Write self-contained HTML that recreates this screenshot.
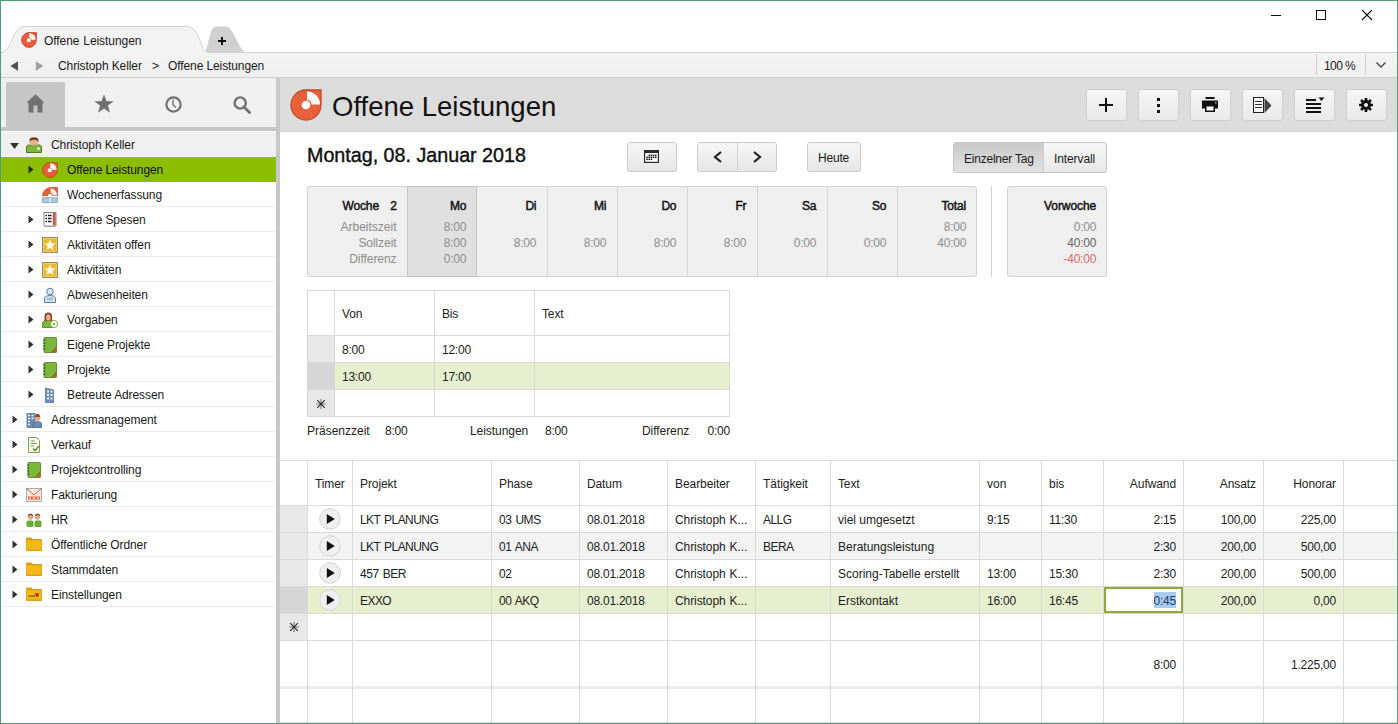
<!DOCTYPE html>
<html><head><meta charset="utf-8"><style>
html,body{margin:0;padding:0;}
body{width:1398px;height:724px;position:relative;overflow:hidden;background:#fff;font-family:"Liberation Sans", sans-serif;}
div{position:absolute;box-sizing:border-box;}
.t{white-space:nowrap;line-height:1;}
</style></head><body>
<div style="left:1px;top:53px;width:1396px;height:25px;background:linear-gradient(#f3f3f3,#efefef)"></div><div style="left:1px;top:77px;width:1396px;height:1px;background:#d0d0d0"></div><svg style="position:absolute;left:0px;top:0px" width="260" height="54" viewBox="0 0 260 54"><path d="M203 52.5 C209 52.5 208 27 216 26.5 L226 26.5 C234 27 239 52.5 247 52.5 Z" fill="#d0d0d0"/><path d="M1 52.5 C12 52.5 11 26.5 25 26.5 L187 26.5 C201 26.5 199 52.5 209 52.5 L209 54 L1 54 Z" fill="#f3f3f3"/><path d="M1 52.5 C12 52.5 11 26.5 25 26.5 L187 26.5 C201 26.5 199 52.5 209 52.5" fill="none" stroke="#d2d2d2" stroke-width="1"/></svg><div style="left:208px;top:52px;width:1189px;height:1px;background:#d2d2d2"></div><svg style="position:absolute;left:218px;top:37px" width="8" height="8" viewBox="0 0 8 8"><path d="M4 0 V8 M0 4 H8" stroke="#111" stroke-width="2"/></svg><svg style="position:absolute;left:21px;top:32px" width="16" height="16" viewBox="0 0 32 32"><path d="M16 1.2 A14.8 14.8 0 1 0 30.8 16 V1.2 Z" fill="#e8603a" stroke="#b8442a" stroke-width="1.6"/><path d="M16.6 15.4 V2.6 A12.8 12.8 0 0 1 29.4 15.4 Z" fill="#fff"/><circle cx="15.6" cy="16.4" r="5" fill="#e8603a"/><circle cx="15.6" cy="16.4" r="4" fill="#fff"/></svg><div class="t" style="left:44px;top:34.84px;font-size:12px;color:#1a1a1a;font-weight:normal;;letter-spacing:-0.07px;word-spacing:0.67px">Offene Leistungen</div><div style="left:1271px;top:15px;width:10px;height:1px;background:#111"></div><div style="left:1316px;top:10px;width:10px;height:10px;border:1px solid #111"></div><svg style="position:absolute;left:1361px;top:9px" width="12" height="12" viewBox="0 0 12 12"><path d="M1 1 L11 11 M11 1 L1 11" stroke="#111" stroke-width="1.1"/></svg><svg style="position:absolute;left:10px;top:61px" width="9" height="10" viewBox="0 0 9 10"><path d="M8 0.3 L0.3 5 L8 9.7 Z" fill="#505050"/></svg><svg style="position:absolute;left:35px;top:61px" width="9" height="10" viewBox="0 0 9 10"><path d="M0.8 0.3 L8.5 5 L0.8 9.7 Z" fill="#a0a0a0"/></svg><div class="t" style="left:58px;top:59.84px;font-size:12px;color:#1a1a1a;font-weight:normal;letter-spacing:-0.1px">Christoph Keller</div><div class="t" style="left:152px;top:59.84px;font-size:12px;color:#1a1a1a;font-weight:normal;">&gt;</div><div class="t" style="left:168px;top:59.84px;font-size:12px;color:#1a1a1a;font-weight:normal;letter-spacing:-0.1px">Offene Leistungen</div><div style="left:1316px;top:54px;width:1px;height:21px;background:#d0d0d0"></div><div style="left:1365px;top:54px;width:1px;height:21px;background:#d0d0d0"></div><div class="t" style="left:1324px;top:59.84px;font-size:12px;color:#1a1a1a;font-weight:normal;letter-spacing:-0.6px">100 %</div><svg style="position:absolute;left:1376px;top:62px" width="10" height="6" viewBox="0 0 10 6"><path d="M0.5 0.5 L5 5 L9.5 0.5" stroke="#444" stroke-width="1.4" fill="none"/></svg><div style="left:1px;top:78px;width:275px;height:49px;background:#f0f0f0"></div><div style="left:6px;top:82px;width:59px;height:46px;background:#c6c6c6;border-radius:2px 2px 0 0"></div><div style="left:1px;top:127px;width:275px;height:4px;background:#c6c6c6"></div><svg style="position:absolute;left:27px;top:94px" width="18" height="19" viewBox="0 0 18 19"><path d="M0.8 9 L8.5 1.8 L16.2 9" stroke="#707070" stroke-width="2.2" fill="none"/><path d="M1.5 9.2 L8.5 3.2 L15.5 9.2 V18.5 H10.5 V11.5 H6.5 V18.5 H1.5 Z" fill="#707070"/></svg><svg style="position:absolute;left:94px;top:94px" width="20" height="20" viewBox="0 0 20 20"><path d="M10 0.3 L12.5 7.2 L19.8 7.2 L13.9 11.6 L16.1 18.8 L10 14.5 L3.9 18.8 L6.1 11.6 L0.2 7.2 L7.5 7.2 Z" fill="#707070"/></svg><svg style="position:absolute;left:165px;top:96px" width="17" height="17" viewBox="0 0 17 17"><circle cx="8.5" cy="8.5" r="7.1" stroke="#707070" stroke-width="2.2" fill="none"/><path d="M8 3.5 V8.8 L11 11.5" stroke="#707070" stroke-width="1.4" fill="none"/></svg><svg style="position:absolute;left:233px;top:96px" width="18" height="18" viewBox="0 0 18 18"><circle cx="7.2" cy="7" r="5.6" stroke="#707070" stroke-width="2.4" fill="none"/><path d="M11 11 L16.5 16.5" stroke="#707070" stroke-width="2.8" stroke-linecap="round"/></svg><div style="left:276px;top:78px;width:4px;height:646px;background:#c8c8c8"></div><div style="left:1px;top:132px;width:275px;height:25px;background:#f0f0f0"></div><svg style="position:absolute;left:10px;top:143px" width="9" height="6" viewBox="0 0 9 6"><path d="M0 0 L9 0 L4.5 6 Z" fill="#333"/></svg><svg style="position:absolute;left:26px;top:137px" width="16" height="16" viewBox="0 0 16 16"><path d="M0.5 15.5 V10 C0.5 8.8 1.5 8 3 8 H13 C14.5 8 15.5 8.8 15.5 10 V15.5 Z" fill="#7ab83a" stroke="#4d7a25" stroke-width="1"/><rect x="4" y="1" width="8" height="7.5" rx="2" fill="#e6b08e"/><path d="M3.6 5.5 V3 C3.6 1.2 5 0.3 8 0.3 C11 0.3 12.4 1.2 12.4 3 V5.5 C11.8 3.5 10.5 2.8 8 2.8 C5.5 2.8 4.2 3.5 3.6 5.5 Z" fill="#7a3a1a"/><rect x="11" y="10.5" width="3" height="2.2" fill="#e8f8c0"/></svg><div class="t" style="left:51px;top:138.84px;font-size:12px;color:#1a1a1a;font-weight:normal;letter-spacing:-0.1px">Christoph Keller</div><div style="left:1px;top:157px;width:275px;height:25px;background:#8cbe00"></div><svg style="position:absolute;left:28px;top:165px" width="6" height="9" viewBox="0 0 6 9"><path d="M0.5 0.5 L5.5 4.5 L0.5 8.5 Z" fill="#1e3214"/></svg><svg style="position:absolute;left:42px;top:162px" width="16" height="16" viewBox="0 0 32 32"><path d="M16 1.2 A14.8 14.8 0 1 0 30.8 16 V1.2 Z" fill="#e8603a" stroke="#b8442a" stroke-width="1.6"/><path d="M16.6 15.4 V2.6 A12.8 12.8 0 0 1 29.4 15.4 Z" fill="#fff"/><circle cx="15.6" cy="16.4" r="5" fill="#e8603a"/><circle cx="15.6" cy="16.4" r="4" fill="#fff"/></svg><div class="t" style="left:67px;top:163.84px;font-size:12px;color:#111;font-weight:normal;letter-spacing:-0.1px">Offene Leistungen</div><div style="left:1px;top:206px;width:275px;height:1px;background:#ebebeb"></div><svg style="position:absolute;left:42px;top:187px" width="16" height="16" viewBox="0 0 16 16"><path d="M0.5 9 A8.5 8.5 0 0 1 9 0.5 H15.5 V9 Z" fill="#e8603a" stroke="#c24a26" stroke-width="0.7"/><path d="M8.7 8.3 V1.6 A6.7 6.7 0 0 1 15 8.3 Z" fill="#fff"/><circle cx="8" cy="8.6" r="2.9" fill="#e8603a"/><circle cx="8" cy="8.6" r="1.9" fill="#fff"/><rect x="0.3" y="9" width="15.4" height="1.8" fill="#fff"/><rect x="0.5" y="10.8" width="15" height="4.7" fill="#b0c8dc" stroke="#7e9cb8" stroke-width="0.8"/><rect x="7.6" y="11" width="0.9" height="4.5" fill="#fff"/></svg><div class="t" style="left:67px;top:188.84px;font-size:12px;color:#1a1a1a;font-weight:normal;letter-spacing:-0.1px">Wochenerfassung</div><div style="left:1px;top:231px;width:275px;height:1px;background:#ebebeb"></div><svg style="position:absolute;left:28px;top:215px" width="6" height="9" viewBox="0 0 6 9"><path d="M0.5 0.5 L5.5 4.5 L0.5 8.5 Z" fill="#333"/></svg><svg style="position:absolute;left:42px;top:212px" width="16" height="16" viewBox="0 0 16 16"><path d="M2 0.5 H14 V13.5 L13 14.8 L12 13.5 L11 14.8 L10 13.5 L9 14.8 L8 13.5 L7 14.8 L6 13.5 L5 14.8 L4 13.5 L3 14.8 L2 13.5 Z" fill="#fff" stroke="#666" stroke-width="0.8"/><rect x="10.8" y="0.8" width="2.8" height="12.6" fill="#d05a3a"/><path d="M3.5 3.5 H5 M6 3.5 H9.5 M3.5 6.5 H5 M6 6.5 H9.5 M3.5 9.5 H5 M6 9.5 H9.5" stroke="#222" stroke-width="1.3"/></svg><div class="t" style="left:67px;top:213.84px;font-size:12px;color:#1a1a1a;font-weight:normal;letter-spacing:-0.1px">Offene Spesen</div><div style="left:1px;top:256px;width:275px;height:1px;background:#ebebeb"></div><svg style="position:absolute;left:28px;top:240px" width="6" height="9" viewBox="0 0 6 9"><path d="M0.5 0.5 L5.5 4.5 L0.5 8.5 Z" fill="#333"/></svg><svg style="position:absolute;left:42px;top:237px" width="16" height="16" viewBox="0 0 16 16"><rect x="0.5" y="0.5" width="15" height="15" fill="#e8b830" stroke="#9a8a6a" stroke-width="1"/><rect x="1.5" y="1.5" width="13" height="13" fill="none" stroke="#f4d070" stroke-width="0.8"/><path d="M8 2.3 L9.7 6.1 L13.8 6.4 L10.7 9.1 L11.6 13.2 L8 11 L4.4 13.2 L5.3 9.1 L2.2 6.4 L6.3 6.1 Z" fill="#fffbe8" stroke="#f0c850" stroke-width="0.5"/></svg><div class="t" style="left:67px;top:238.84px;font-size:12px;color:#1a1a1a;font-weight:normal;letter-spacing:-0.1px">Aktivitäten offen</div><div style="left:1px;top:281px;width:275px;height:1px;background:#ebebeb"></div><svg style="position:absolute;left:28px;top:265px" width="6" height="9" viewBox="0 0 6 9"><path d="M0.5 0.5 L5.5 4.5 L0.5 8.5 Z" fill="#333"/></svg><svg style="position:absolute;left:42px;top:262px" width="16" height="16" viewBox="0 0 16 16"><rect x="0.5" y="0.5" width="15" height="15" fill="#e8b830" stroke="#9a8a6a" stroke-width="1"/><rect x="1.5" y="1.5" width="13" height="13" fill="none" stroke="#f4d070" stroke-width="0.8"/><path d="M8 2.3 L9.7 6.1 L13.8 6.4 L10.7 9.1 L11.6 13.2 L8 11 L4.4 13.2 L5.3 9.1 L2.2 6.4 L6.3 6.1 Z" fill="#fffbe8" stroke="#f0c850" stroke-width="0.5"/></svg><div class="t" style="left:67px;top:263.84px;font-size:12px;color:#1a1a1a;font-weight:normal;letter-spacing:-0.1px">Aktivitäten</div><div style="left:1px;top:306px;width:275px;height:1px;background:#ebebeb"></div><svg style="position:absolute;left:28px;top:290px" width="6" height="9" viewBox="0 0 6 9"><path d="M0.5 0.5 L5.5 4.5 L0.5 8.5 Z" fill="#333"/></svg><svg style="position:absolute;left:42px;top:287px" width="16" height="16" viewBox="0 0 16 16"><circle cx="8" cy="4.5" r="3.3" fill="#d8e6f2" stroke="#5a7fa8" stroke-width="1"/><path d="M2.5 15.5 V12 C2.5 9.5 4.5 8.5 8 8.5 C11.5 8.5 13.5 9.5 13.5 12 V15.5 Z" fill="#d8e6f2" stroke="#5a7fa8" stroke-width="1"/><rect x="5" y="10.5" width="6" height="3" fill="#a8c4dc"/></svg><div class="t" style="left:67px;top:288.84px;font-size:12px;color:#1a1a1a;font-weight:normal;letter-spacing:-0.1px">Abwesenheiten</div><div style="left:1px;top:331px;width:275px;height:1px;background:#ebebeb"></div><svg style="position:absolute;left:28px;top:315px" width="6" height="9" viewBox="0 0 6 9"><path d="M0.5 0.5 L5.5 4.5 L0.5 8.5 Z" fill="#333"/></svg><svg style="position:absolute;left:42px;top:312px" width="16" height="16" viewBox="0 0 16 16"><path d="M0.5 15.5 V11.5 C0.5 9.5 2 8.5 4.5 8.5 H9 C11 8.5 12 9.5 12 11.5 V15.5 Z" fill="#7ab83a" stroke="#4d7a25" stroke-width="0.8"/><path d="M2.5 9 V4 C2.5 1.5 4 0.5 6.3 0.5 C8.6 0.5 10.1 1.5 10.1 4 V9 Z" fill="#8a4a28"/><rect x="4.2" y="2.5" width="4.2" height="6" rx="1.5" fill="#e6b08e"/><g transform="translate(12 12)"><circle r="3.6" fill="#fff" stroke="#7ab83a" stroke-width="1"/><circle r="1.2" fill="#7ab83a"/></g></svg><div class="t" style="left:67px;top:313.84px;font-size:12px;color:#1a1a1a;font-weight:normal;letter-spacing:-0.1px">Vorgaben</div><div style="left:1px;top:356px;width:275px;height:1px;background:#ebebeb"></div><svg style="position:absolute;left:28px;top:340px" width="6" height="9" viewBox="0 0 6 9"><path d="M0.5 0.5 L5.5 4.5 L0.5 8.5 Z" fill="#333"/></svg><svg style="position:absolute;left:42px;top:337px" width="16" height="16" viewBox="0 0 16 16"><rect x="2" y="0.5" width="12.5" height="15" rx="0.8" fill="#7ab83a" stroke="#4a7a2a" stroke-width="0.8"/><path d="M1 3 H3.5 M1 6 H3.5 M1 9 H3.5 M1 12 H3.5" stroke="#3a5a20" stroke-width="1"/><path d="M9.5 15.5 L14.5 9.5 V15.5 Z" fill="#c8602a"/><path d="M9.5 15.5 L14.5 9.5" stroke="#4a6a2a" stroke-width="0.8"/></svg><div class="t" style="left:67px;top:338.84px;font-size:12px;color:#1a1a1a;font-weight:normal;letter-spacing:-0.1px">Eigene Projekte</div><div style="left:1px;top:381px;width:275px;height:1px;background:#ebebeb"></div><svg style="position:absolute;left:28px;top:365px" width="6" height="9" viewBox="0 0 6 9"><path d="M0.5 0.5 L5.5 4.5 L0.5 8.5 Z" fill="#333"/></svg><svg style="position:absolute;left:42px;top:362px" width="16" height="16" viewBox="0 0 16 16"><rect x="2" y="0.5" width="12.5" height="15" rx="0.8" fill="#7ab83a" stroke="#4a7a2a" stroke-width="0.8"/><path d="M1 3 H3.5 M1 6 H3.5 M1 9 H3.5 M1 12 H3.5" stroke="#3a5a20" stroke-width="1"/><path d="M9.5 15.5 L14.5 9.5 V15.5 Z" fill="#c8602a"/><path d="M9.5 15.5 L14.5 9.5" stroke="#4a6a2a" stroke-width="0.8"/></svg><div class="t" style="left:67px;top:363.84px;font-size:12px;color:#1a1a1a;font-weight:normal;letter-spacing:-0.1px">Projekte</div><div style="left:1px;top:406px;width:275px;height:1px;background:#ebebeb"></div><svg style="position:absolute;left:28px;top:390px" width="6" height="9" viewBox="0 0 6 9"><path d="M0.5 0.5 L5.5 4.5 L0.5 8.5 Z" fill="#333"/></svg><svg style="position:absolute;left:42px;top:387px" width="16" height="16" viewBox="0 0 16 16"><path d="M3 0.5 L12 2.5 V16 H3 Z" fill="#6a8cb0"/><path d="M5 4.5 H7 M8.5 4.5 H10.5 M5 8 H7 M8.5 8 H10.5 M5 11.5 H7 M8.5 11.5 H10.5" stroke="#f0f4f8" stroke-width="2"/></svg><div class="t" style="left:67px;top:388.84px;font-size:12px;color:#1a1a1a;font-weight:normal;letter-spacing:-0.1px">Betreute Adressen</div><div style="left:1px;top:431px;width:275px;height:1px;background:#ebebeb"></div><svg style="position:absolute;left:12px;top:415px" width="6" height="9" viewBox="0 0 6 9"><path d="M0.5 0.5 L5.5 4.5 L0.5 8.5 Z" fill="#333"/></svg><svg style="position:absolute;left:26px;top:412px" width="16" height="16" viewBox="0 0 16 16"><rect x="0.5" y="1" width="9" height="15" fill="#6a8cb0"/><path d="M2 3.5 H4 M5.5 3.5 H7.5 M2 6.5 H4 M5.5 6.5 H7.5 M2 9.5 H4 M2 12.5 H4" stroke="#e8f0f8" stroke-width="1.4"/><circle cx="11.5" cy="6" r="2.8" fill="#e0a888"/><path d="M9 5 C9 2.5 10 2 11.5 2 C13 2 14 2.5 14 5 Z" fill="#8a4a2a"/><path d="M7 16 V12.5 C7 10.5 9 9.5 11.5 9.5 C14 9.5 16 10.5 16 12.5 V16 Z" fill="#6a8cb0" stroke="#3a608a" stroke-width="0.6"/></svg><div class="t" style="left:51px;top:413.84px;font-size:12px;color:#1a1a1a;font-weight:normal;letter-spacing:-0.1px">Adressmanagement</div><div style="left:1px;top:456px;width:275px;height:1px;background:#ebebeb"></div><svg style="position:absolute;left:12px;top:440px" width="6" height="9" viewBox="0 0 6 9"><path d="M0.5 0.5 L5.5 4.5 L0.5 8.5 Z" fill="#333"/></svg><svg style="position:absolute;left:26px;top:437px" width="16" height="16" viewBox="0 0 16 16"><path d="M2.5 0.5 H10.5 L13.5 3.5 V15.5 H2.5 Z" fill="#fff" stroke="#7aa040" stroke-width="1"/><path d="M4.5 4 H9 M4.5 6.5 H11 M4.5 9 H8" stroke="#7aa040" stroke-width="1"/><path d="M7 11.5 L9 13.5 L13 9" stroke="#5a9a2a" stroke-width="1.6" fill="none"/></svg><div class="t" style="left:51px;top:438.84px;font-size:12px;color:#1a1a1a;font-weight:normal;letter-spacing:-0.1px">Verkauf</div><div style="left:1px;top:481px;width:275px;height:1px;background:#ebebeb"></div><svg style="position:absolute;left:12px;top:465px" width="6" height="9" viewBox="0 0 6 9"><path d="M0.5 0.5 L5.5 4.5 L0.5 8.5 Z" fill="#333"/></svg><svg style="position:absolute;left:26px;top:462px" width="16" height="16" viewBox="0 0 16 16"><rect x="2" y="0.5" width="12.5" height="15" rx="0.8" fill="#7ab83a" stroke="#4a7a2a" stroke-width="0.8"/><path d="M1 3 H3.5 M1 6 H3.5 M1 9 H3.5 M1 12 H3.5" stroke="#3a5a20" stroke-width="1"/><path d="M9.5 15.5 L14.5 9.5 V15.5 Z" fill="#c8602a"/><path d="M9.5 15.5 L14.5 9.5" stroke="#4a6a2a" stroke-width="0.8"/></svg><div class="t" style="left:51px;top:463.84px;font-size:12px;color:#1a1a1a;font-weight:normal;letter-spacing:-0.1px">Projektcontrolling</div><div style="left:1px;top:506px;width:275px;height:1px;background:#ebebeb"></div><svg style="position:absolute;left:12px;top:490px" width="6" height="9" viewBox="0 0 6 9"><path d="M0.5 0.5 L5.5 4.5 L0.5 8.5 Z" fill="#333"/></svg><svg style="position:absolute;left:26px;top:487px" width="16" height="16" viewBox="0 0 16 16"><rect x="0.5" y="1.5" width="15" height="13" fill="#f4e8e0" stroke="#999" stroke-width="0.8"/><path d="M0.5 1.5 L8 8 L15.5 1.5" stroke="#d9603a" stroke-width="1" fill="none"/><rect x="2" y="9.5" width="12" height="3" fill="#e06040"/><path d="M3 11 H5 M6.5 11 H9.5 M11 11 H13" stroke="#fff" stroke-width="1"/></svg><div class="t" style="left:51px;top:488.84px;font-size:12px;color:#1a1a1a;font-weight:normal;letter-spacing:-0.1px">Fakturierung</div><div style="left:1px;top:531px;width:275px;height:1px;background:#ebebeb"></div><svg style="position:absolute;left:12px;top:515px" width="6" height="9" viewBox="0 0 6 9"><path d="M0.5 0.5 L5.5 4.5 L0.5 8.5 Z" fill="#333"/></svg><svg style="position:absolute;left:26px;top:512px" width="16" height="16" viewBox="0 0 16 16"><circle cx="4.5" cy="5" r="2.7" fill="#e0a888"/><path d="M1.8 4.8 C1.8 2.3 3 1.8 4.5 1.8 C6 1.8 7.2 2.3 7.2 4.8 C6.5 3.6 5.5 3.3 4.5 3.3 C3.5 3.3 2.5 3.6 1.8 4.8Z" fill="#8a4a2a"/><circle cx="11.5" cy="5" r="2.7" fill="#e0a888"/><path d="M8.8 4.8 C8.8 2.3 10 1.8 11.5 1.8 C13 1.8 14.2 2.3 14.2 4.8 C13.5 3.6 12.5 3.3 11.5 3.3 C10.5 3.3 9.5 3.6 8.8 4.8Z" fill="#8a4a2a"/><rect x="0.5" y="8.5" width="7" height="6.5" rx="1.5" fill="#6aaa3a"/><rect x="8.5" y="8.5" width="7" height="6.5" rx="1.5" fill="#6aaa3a"/></svg><div class="t" style="left:51px;top:513.84px;font-size:12px;color:#1a1a1a;font-weight:normal;letter-spacing:-0.1px">HR</div><div style="left:1px;top:556px;width:275px;height:1px;background:#ebebeb"></div><svg style="position:absolute;left:12px;top:540px" width="6" height="9" viewBox="0 0 6 9"><path d="M0.5 0.5 L5.5 4.5 L0.5 8.5 Z" fill="#333"/></svg><svg style="position:absolute;left:26px;top:536px" width="16" height="16" viewBox="0 0 16 16"><path d="M0.5 2 H5.5 L6.8 3.5 H15.5 V14.5 H0.5 Z" fill="#e0a010" stroke="#c89010" stroke-width="0.8"/><rect x="0.5" y="4.5" width="15" height="10" fill="#f6b818"/><rect x="0.5" y="13.6" width="15" height="1" fill="#d8a010"/></svg><div class="t" style="left:51px;top:538.84px;font-size:12px;color:#1a1a1a;font-weight:normal;letter-spacing:-0.1px">Öffentliche Ordner</div><div style="left:1px;top:581px;width:275px;height:1px;background:#ebebeb"></div><svg style="position:absolute;left:12px;top:565px" width="6" height="9" viewBox="0 0 6 9"><path d="M0.5 0.5 L5.5 4.5 L0.5 8.5 Z" fill="#333"/></svg><svg style="position:absolute;left:26px;top:561px" width="16" height="16" viewBox="0 0 16 16"><path d="M0.5 2 H5.5 L6.8 3.5 H15.5 V14.5 H0.5 Z" fill="#e0a010" stroke="#c89010" stroke-width="0.8"/><rect x="0.5" y="4.5" width="15" height="10" fill="#f6b818"/><rect x="0.5" y="13.6" width="15" height="1" fill="#d8a010"/></svg><div class="t" style="left:51px;top:563.84px;font-size:12px;color:#1a1a1a;font-weight:normal;letter-spacing:-0.1px">Stammdaten</div><div style="left:1px;top:606px;width:275px;height:1px;background:#ebebeb"></div><svg style="position:absolute;left:12px;top:590px" width="6" height="9" viewBox="0 0 6 9"><path d="M0.5 0.5 L5.5 4.5 L0.5 8.5 Z" fill="#333"/></svg><svg style="position:absolute;left:26px;top:586px" width="16" height="16" viewBox="0 0 16 16"><path d="M0.5 2 H5.5 L6.8 3.5 H15.5 V14.5 H0.5 Z" fill="#e0a010" stroke="#c89010" stroke-width="0.8"/><rect x="0.5" y="4.5" width="15" height="10" fill="#f6b818"/><rect x="0.5" y="13.6" width="15" height="1" fill="#d8a010"/><path d="M2.5 10 H9" stroke="#7a5a10" stroke-width="1.2"/><path d="M9 8 C9 6.8 10.5 6.8 11 8 C11.5 6.8 13 6.8 13 8 C13 9.5 11 11 11 11.5 C11 11 9 9.5 9 8 Z" fill="#c0281e"/></svg><div class="t" style="left:51px;top:588.84px;font-size:12px;color:#1a1a1a;font-weight:normal;letter-spacing:-0.1px">Einstellungen</div><div style="left:280px;top:78px;width:1117px;height:54px;background:#dcdcdc;border-bottom:1px solid #d4d4d4"></div><svg style="position:absolute;left:290px;top:89px" width="32" height="32" viewBox="0 0 32 32"><path d="M16 1 A15 15 0 1 0 31 16 V1 Z" fill="#e8603a" stroke="#c24a26" stroke-width="1.3"/><path d="M17 15.5 V2.5 A13 13 0 0 1 30 15.5 Z" fill="#fff"/><circle cx="16" cy="16" r="5.6" fill="#e8603a"/><circle cx="16" cy="16" r="4.3" fill="#fff"/></svg><div class="t" style="left:332px;top:92.92px;font-size:27.5px;color:#111;font-weight:normal;">Offene Leistungen</div><div style="left:1086px;top:89px;width:41px;height:32px;border:1px solid #cfcfcf;border-radius:3px;background:linear-gradient(#f5f5f5,#e9e9e9)"></div><div style="left:1138px;top:89px;width:41px;height:32px;border:1px solid #cfcfcf;border-radius:3px;background:linear-gradient(#f5f5f5,#e9e9e9)"></div><div style="left:1190px;top:89px;width:41px;height:32px;border:1px solid #cfcfcf;border-radius:3px;background:linear-gradient(#f5f5f5,#e9e9e9)"></div><div style="left:1242px;top:89px;width:41px;height:32px;border:1px solid #cfcfcf;border-radius:3px;background:linear-gradient(#f5f5f5,#e9e9e9)"></div><div style="left:1294px;top:89px;width:41px;height:32px;border:1px solid #cfcfcf;border-radius:3px;background:linear-gradient(#f5f5f5,#e9e9e9)"></div><div style="left:1346px;top:89px;width:41px;height:32px;border:1px solid #cfcfcf;border-radius:3px;background:linear-gradient(#f5f5f5,#e9e9e9)"></div><svg style="position:absolute;left:1099px;top:98px" width="14" height="14" viewBox="0 0 14 14"><path d="M7 0 V14 M0 7 H14" stroke="#111" stroke-width="2"/></svg><svg style="position:absolute;left:1156px;top:98px" width="5" height="16" viewBox="0 0 5 16"><rect x="1" y="0" width="3" height="3" fill="#111"/><rect x="1" y="6" width="3" height="3" fill="#111"/><rect x="1" y="12" width="3" height="3" fill="#111"/></svg><svg style="position:absolute;left:1202px;top:97px" width="16" height="16" viewBox="0 0 16 16"><rect x="3.5" y="0" width="9" height="2" fill="#111"/><path d="M0 3.5 H16 V11.5 H13 V8.5 H3 V11.5 H0 Z" fill="#111"/><rect x="3.75" y="8.75" width="8.5" height="5.5" fill="#fff" stroke="#111" stroke-width="1.5"/><rect x="13" y="5" width="1.5" height="1.5" fill="#aaa"/></svg><svg style="position:absolute;left:1253px;top:97px" width="20" height="16" viewBox="0 0 20 16"><rect x="0.5" y="0.5" width="10" height="15" fill="#fafafa" stroke="#222" stroke-width="1"/><path d="M2 4.5 H9 M2 7.5 H9 M2 10.5 H9" stroke="#333" stroke-width="1"/><path d="M11.5 1 L18.5 8.5 L11.5 16 Z" fill="#444"/></svg><svg style="position:absolute;left:1306px;top:97px" width="20" height="17" viewBox="0 0 20 17"><path d="M0 3 H10 M0 7 H15 M0 11 H15 M0 15 H15" stroke="#111" stroke-width="2"/><path d="M12.5 0.5 H18.5 L15.5 4 Z" fill="#111"/></svg><svg style="position:absolute;left:1359px;top:98px" width="14" height="14" viewBox="0 0 14 14"><g transform="translate(7 7)"><g fill="#111"><rect x="-1.35" y="-7" width="2.7" height="3.5" rx="0.6" transform="rotate(0)"/><rect x="-1.35" y="-7" width="2.7" height="3.5" rx="0.6" transform="rotate(45)"/><rect x="-1.35" y="-7" width="2.7" height="3.5" rx="0.6" transform="rotate(90)"/><rect x="-1.35" y="-7" width="2.7" height="3.5" rx="0.6" transform="rotate(135)"/><rect x="-1.35" y="-7" width="2.7" height="3.5" rx="0.6" transform="rotate(180)"/><rect x="-1.35" y="-7" width="2.7" height="3.5" rx="0.6" transform="rotate(225)"/><rect x="-1.35" y="-7" width="2.7" height="3.5" rx="0.6" transform="rotate(270)"/><rect x="-1.35" y="-7" width="2.7" height="3.5" rx="0.6" transform="rotate(315)"/></g><circle r="4.9" fill="#111"/><circle r="2.1" fill="#f0f0f0"/></g></svg><div class="t" style="left:307px;top:146.32px;font-size:19.7px;color:#111;font-weight:normal;-webkit-text-stroke:0.4px #111">Montag, 08. Januar 2018</div><div style="left:627px;top:142px;width:50px;height:30px;border:1px solid #cccccc;border-radius:3px;background:linear-gradient(#f6f6f6,#e6e6e6)"></div><svg style="position:absolute;left:644px;top:150px" width="15" height="13" viewBox="0 0 15 13"><rect x="0.6" y="0.6" width="13.8" height="11.8" fill="#fff" stroke="#2a2a2a" stroke-width="1.2"/><rect x="0" y="0" width="15" height="3" fill="#2a2a2a"/><rect x="4.45" y="4.60" width="1.6" height="1.5" fill="#222"/><rect x="6.60" y="4.60" width="1.6" height="1.5" fill="#222"/><rect x="8.75" y="4.60" width="1.6" height="1.5" fill="#222"/><rect x="10.90" y="4.60" width="1.6" height="1.5" fill="#222"/><rect x="2.30" y="6.60" width="1.6" height="1.5" fill="#222"/><rect x="4.45" y="6.60" width="1.6" height="1.5" fill="#222"/><rect x="6.60" y="6.60" width="1.6" height="1.5" fill="#222"/><rect x="8.75" y="6.60" width="1.6" height="1.5" fill="#222"/><rect x="10.90" y="6.60" width="1.6" height="1.5" fill="#222"/><rect x="2.30" y="8.60" width="1.6" height="1.5" fill="#222"/><rect x="4.45" y="8.60" width="1.6" height="1.5" fill="#222"/><rect x="6.60" y="8.60" width="1.6" height="1.5" fill="#222"/></svg><div style="left:697px;top:142px;width:80px;height:30px;border:1px solid #cccccc;border-radius:3px;background:linear-gradient(#f6f6f6,#e6e6e6)"></div><div style="left:737px;top:143px;width:1px;height:28px;background:#d0d0d0"></div><svg style="position:absolute;left:713px;top:151px" width="9" height="12" viewBox="0 0 9 12"><path d="M8 1 L2 6 L8 11" stroke="#222" stroke-width="2.2" fill="none"/></svg><svg style="position:absolute;left:753px;top:151px" width="9" height="12" viewBox="0 0 9 12"><path d="M1 1 L7 6 L1 11" stroke="#222" stroke-width="2.2" fill="none"/></svg><div style="left:807px;top:142px;width:54px;height:30px;border:1px solid #cccccc;border-radius:3px;background:linear-gradient(#f6f6f6,#e6e6e6)"></div><div class="t" style="left:818px;top:151.84px;font-size:12px;color:#1a1a1a;font-weight:normal;letter-spacing:-0.2px">Heute</div><div style="left:953px;top:142px;width:154px;height:31px;border:1px solid #c4c4c4;border-radius:3px;background:linear-gradient(#f6f6f6,#e8e8e8)"></div><div style="left:954px;top:143px;width:90px;height:29px;border-radius:2px 0 0 2px;background:linear-gradient(#c9c9c9,#e2e2e2)"></div><div style="left:1043px;top:143px;width:1px;height:29px;background:#cfcfcf"></div><div class="t" style="left:964px;top:152.64px;font-size:12px;color:#1a1a1a;font-weight:normal;letter-spacing:-0.22px">Einzelner Tag</div><div class="t" style="left:1054px;top:152.64px;font-size:12px;color:#1a1a1a;font-weight:normal;letter-spacing:-0.1px">Intervall</div><div style="left:307px;top:186px;width:670px;height:91px;border:1px solid #d2d2d2;border-radius:3px;background:#efefef"></div><div style="left:407px;top:186px;width:70px;height:91px;background:#e0e0e0;border:1px solid #c4c4c4"></div><div style="left:547px;top:187px;width:1px;height:89px;background:#d6d6d6"></div><div style="left:617px;top:187px;width:1px;height:89px;background:#d6d6d6"></div><div style="left:687px;top:187px;width:1px;height:89px;background:#d6d6d6"></div><div style="left:757px;top:187px;width:1px;height:89px;background:#d6d6d6"></div><div style="left:827px;top:187px;width:1px;height:89px;background:#d6d6d6"></div><div style="left:897px;top:187px;width:1px;height:89px;background:#d6d6d6"></div><div class="t" style="left:279px;width:100px;text-align:right;top:199.64px;font-size:12px;color:#111;font-weight:normal;-webkit-text-stroke:0.45px #111;letter-spacing:-0.11px">Woche</div><div class="t" style="left:366.5px;width:30px;text-align:right;top:199.64px;font-size:12px;color:#111;font-weight:normal;-webkit-text-stroke:0.45px #111;letter-spacing:-0.30px">2</div><div class="t" style="left:296.5px;width:100px;text-align:right;top:221.04px;font-size:12px;color:#8c8c8c;font-weight:normal;">Arbeitszeit</div><div class="t" style="left:296.5px;width:100px;text-align:right;top:237.04px;font-size:12px;color:#8c8c8c;font-weight:normal;;letter-spacing:-0.07px">Sollzeit</div><div class="t" style="left:296.5px;width:100px;text-align:right;top:252.84px;font-size:12px;color:#8c8c8c;font-weight:normal;;letter-spacing:-0.06px">Differenz</div><div class="t" style="left:386.2px;width:80px;text-align:right;top:199.64px;font-size:12px;color:#111;font-weight:normal;-webkit-text-stroke:0.45px #111;letter-spacing:-0.28px">Mo</div><div class="t" style="left:386.2px;width:80px;text-align:right;top:221.04px;font-size:12px;color:#8c8c8c;font-weight:normal;;letter-spacing:-0.22px">8:00</div><div class="t" style="left:386.2px;width:80px;text-align:right;top:237.04px;font-size:12px;color:#8c8c8c;font-weight:normal;;letter-spacing:-0.22px">8:00</div><div class="t" style="left:386.2px;width:80px;text-align:right;top:252.84px;font-size:12px;color:#8c8c8c;font-weight:normal;;letter-spacing:-0.22px">0:00</div><div class="t" style="left:456.20000000000005px;width:80px;text-align:right;top:199.64px;font-size:12px;color:#111;font-weight:normal;-webkit-text-stroke:0.45px #111;letter-spacing:-0.28px">Di</div><div class="t" style="left:456.20000000000005px;width:80px;text-align:right;top:237.04px;font-size:12px;color:#8c8c8c;font-weight:normal;;letter-spacing:-0.22px">8:00</div><div class="t" style="left:526.2px;width:80px;text-align:right;top:199.64px;font-size:12px;color:#111;font-weight:normal;-webkit-text-stroke:0.45px #111;letter-spacing:-0.28px">Mi</div><div class="t" style="left:526.2px;width:80px;text-align:right;top:237.04px;font-size:12px;color:#8c8c8c;font-weight:normal;;letter-spacing:-0.22px">8:00</div><div class="t" style="left:596.2px;width:80px;text-align:right;top:199.64px;font-size:12px;color:#111;font-weight:normal;-webkit-text-stroke:0.45px #111;letter-spacing:-0.28px">Do</div><div class="t" style="left:596.2px;width:80px;text-align:right;top:237.04px;font-size:12px;color:#8c8c8c;font-weight:normal;;letter-spacing:-0.22px">8:00</div><div class="t" style="left:666.2px;width:80px;text-align:right;top:199.64px;font-size:12px;color:#111;font-weight:normal;-webkit-text-stroke:0.45px #111;letter-spacing:-0.28px">Fr</div><div class="t" style="left:666.2px;width:80px;text-align:right;top:237.04px;font-size:12px;color:#8c8c8c;font-weight:normal;;letter-spacing:-0.22px">8:00</div><div class="t" style="left:736.2px;width:80px;text-align:right;top:199.64px;font-size:12px;color:#111;font-weight:normal;-webkit-text-stroke:0.45px #111;letter-spacing:-0.28px">Sa</div><div class="t" style="left:736.2px;width:80px;text-align:right;top:237.04px;font-size:12px;color:#8c8c8c;font-weight:normal;;letter-spacing:-0.22px">0:00</div><div class="t" style="left:806.2px;width:80px;text-align:right;top:199.64px;font-size:12px;color:#111;font-weight:normal;-webkit-text-stroke:0.45px #111;letter-spacing:-0.28px">So</div><div class="t" style="left:806.2px;width:80px;text-align:right;top:237.04px;font-size:12px;color:#8c8c8c;font-weight:normal;;letter-spacing:-0.22px">0:00</div><div class="t" style="left:886.2px;width:80px;text-align:right;top:199.64px;font-size:12px;color:#111;font-weight:normal;-webkit-text-stroke:0.45px #111;letter-spacing:-0.11px">Total</div><div class="t" style="left:886.2px;width:80px;text-align:right;top:221.04px;font-size:12px;color:#8c8c8c;font-weight:normal;;letter-spacing:-0.22px">8:00</div><div class="t" style="left:886.2px;width:80px;text-align:right;top:237.04px;font-size:12px;color:#8c8c8c;font-weight:normal;;letter-spacing:-0.24px">40:00</div><div style="left:991px;top:186px;width:1px;height:91px;background:#d2d2d2"></div><div style="left:1007px;top:186px;width:100px;height:91px;border:1px solid #d2d2d2;border-radius:3px;background:#efefef"></div><div class="t" style="left:1006.2px;width:90px;text-align:right;top:199.64px;font-size:12px;color:#111;font-weight:normal;-webkit-text-stroke:0.45px #111;letter-spacing:-0.07px">Vorwoche</div><div class="t" style="left:1006.2px;width:90px;text-align:right;top:221.04px;font-size:12px;color:#8c8c8c;font-weight:normal;;letter-spacing:-0.22px">0:00</div><div class="t" style="left:1006.2px;width:90px;text-align:right;top:237.04px;font-size:12px;color:#666;font-weight:normal;;letter-spacing:-0.24px">40:00</div><div class="t" style="left:1006.2px;width:90px;text-align:right;top:252.84px;font-size:12px;color:#e06a60;font-weight:normal;;letter-spacing:-0.20px">-40:00</div><div style="left:307px;top:290px;width:423px;height:127px;border:1px solid #d8d8d8"></div><div style="left:308px;top:336px;width:27px;height:26px;background:#e8e8e8"></div><div style="left:308px;top:363px;width:27px;height:26px;background:#d6d6d6"></div><div style="left:308px;top:390px;width:27px;height:26px;background:#e8e8e8"></div><div style="left:335px;top:363px;width:394px;height:26px;background:#e6f0cf"></div><div style="left:308px;top:335px;width:421px;height:1px;background:#d8d8d8"></div><div style="left:308px;top:362px;width:421px;height:1px;background:#d8d8d8"></div><div style="left:308px;top:389px;width:421px;height:1px;background:#d8d8d8"></div><div style="left:334px;top:291px;width:1px;height:125px;background:#d8d8d8"></div><div style="left:434px;top:291px;width:1px;height:125px;background:#d8d8d8"></div><div style="left:534px;top:291px;width:1px;height:125px;background:#d8d8d8"></div><div class="t" style="left:342px;top:307.54px;font-size:12px;color:#222;font-weight:normal;;letter-spacing:-0.18px">Von</div><div class="t" style="left:442px;top:307.54px;font-size:12px;color:#222;font-weight:normal;;letter-spacing:-0.18px">Bis</div><div class="t" style="left:542px;top:307.54px;font-size:12px;color:#222;font-weight:normal;;letter-spacing:-0.14px">Text</div><div class="t" style="left:342px;top:344.34px;font-size:12px;color:#222;font-weight:normal;;letter-spacing:-0.22px">8:00</div><div class="t" style="left:442px;top:344.34px;font-size:12px;color:#222;font-weight:normal;;letter-spacing:-0.24px">12:00</div><div class="t" style="left:342px;top:371.34px;font-size:12px;color:#222;font-weight:normal;;letter-spacing:-0.24px">13:00</div><div class="t" style="left:442px;top:371.34px;font-size:12px;color:#222;font-weight:normal;;letter-spacing:-0.24px">17:00</div><svg style="position:absolute;left:315px;top:398px" width="12" height="12" viewBox="0 0 12 12"><path d="M6 1 V11 M1 6 H11" stroke="#777" stroke-width="1.1"/><path d="M2.2 2.2 L9.8 9.8 M9.8 2.2 L2.2 9.8" stroke="#222" stroke-width="1.1"/></svg><div class="t" style="left:307px;top:424.84px;font-size:12px;color:#222;font-weight:normal;">Präsenzzeit</div><div class="t" style="left:385px;top:424.84px;font-size:12px;color:#222;font-weight:normal;;letter-spacing:-0.22px">8:00</div><div class="t" style="left:470px;top:424.84px;font-size:12px;color:#222;font-weight:normal;;letter-spacing:-0.06px">Leistungen</div><div class="t" style="left:545px;top:424.84px;font-size:12px;color:#222;font-weight:normal;;letter-spacing:-0.22px">8:00</div><div class="t" style="left:642px;top:424.84px;font-size:12px;color:#222;font-weight:normal;;letter-spacing:-0.06px">Differenz</div><div class="t" style="left:670px;width:60px;text-align:right;top:424.84px;font-size:12px;color:#222;font-weight:normal;;letter-spacing:-0.22px">0:00</div><div style="left:280px;top:460px;width:1117px;height:1px;background:#dadada"></div><div style="left:307px;top:533px;width:1090px;height:26px;background:#f3f3f3"></div><div style="left:307px;top:587px;width:1090px;height:26px;background:#e6f0cf"></div><div style="left:280px;top:506px;width:27px;height:26px;background:#e8e8e8"></div><div style="left:280px;top:533px;width:27px;height:26px;background:#e8e8e8"></div><div style="left:280px;top:560px;width:27px;height:26px;background:#e8e8e8"></div><div style="left:280px;top:587px;width:27px;height:26px;background:#d6d6d6"></div><div style="left:280px;top:614px;width:27px;height:26px;background:#e8e8e8"></div><div style="left:280px;top:505px;width:1117px;height:1px;background:#dadada"></div><div style="left:280px;top:532px;width:1117px;height:1px;background:#dadada"></div><div style="left:280px;top:559px;width:1117px;height:1px;background:#dadada"></div><div style="left:280px;top:586px;width:1117px;height:1px;background:#dadada"></div><div style="left:280px;top:613px;width:1117px;height:1px;background:#dadada"></div><div style="left:280px;top:640px;width:1117px;height:1px;background:#dadada"></div><div style="left:280px;top:686px;width:1117px;height:3px;background:#ececec"></div><div style="left:280px;top:722px;width:1117px;height:1px;background:#dadada"></div><div style="left:307px;top:461px;width:1px;height:262px;background:#dadada"></div><div style="left:352px;top:461px;width:1px;height:262px;background:#dadada"></div><div style="left:491px;top:461px;width:1px;height:262px;background:#dadada"></div><div style="left:579px;top:461px;width:1px;height:262px;background:#dadada"></div><div style="left:667px;top:461px;width:1px;height:262px;background:#dadada"></div><div style="left:755px;top:461px;width:1px;height:262px;background:#dadada"></div><div style="left:830px;top:461px;width:1px;height:262px;background:#dadada"></div><div style="left:979px;top:461px;width:1px;height:262px;background:#dadada"></div><div style="left:1041px;top:461px;width:1px;height:262px;background:#dadada"></div><div style="left:1103px;top:461px;width:1px;height:262px;background:#dadada"></div><div style="left:1183px;top:461px;width:1px;height:262px;background:#dadada"></div><div style="left:1263px;top:461px;width:1px;height:262px;background:#dadada"></div><div style="left:1343px;top:461px;width:1px;height:262px;background:#dadada"></div><div class="t" style="left:315px;top:477.84px;font-size:12px;color:#222;font-weight:normal;;letter-spacing:-0.11px">Timer</div><div class="t" style="left:360px;top:477.84px;font-size:12px;color:#222;font-weight:normal;;letter-spacing:-0.08px">Projekt</div><div class="t" style="left:499px;top:477.84px;font-size:12px;color:#222;font-weight:normal;;letter-spacing:-0.11px">Phase</div><div class="t" style="left:587px;top:477.84px;font-size:12px;color:#222;font-weight:normal;;letter-spacing:-0.11px">Datum</div><div class="t" style="left:675px;top:477.84px;font-size:12px;color:#222;font-weight:normal;;letter-spacing:-0.06px">Bearbeiter</div><div class="t" style="left:763px;top:477.84px;font-size:12px;color:#222;font-weight:normal;;letter-spacing:-0.06px">Tätigkeit</div><div class="t" style="left:838px;top:477.84px;font-size:12px;color:#222;font-weight:normal;;letter-spacing:-0.14px">Text</div><div class="t" style="left:987px;top:477.84px;font-size:12px;color:#222;font-weight:normal;">von</div><div class="t" style="left:1049px;top:477.84px;font-size:12px;color:#222;font-weight:normal;">bis</div><div class="t" style="left:1076px;width:100px;text-align:right;top:477.84px;font-size:12px;color:#222;font-weight:normal;;letter-spacing:-0.08px">Aufwand</div><div class="t" style="left:1156px;width:100px;text-align:right;top:477.84px;font-size:12px;color:#222;font-weight:normal;;letter-spacing:-0.09px">Ansatz</div><div class="t" style="left:1236px;width:100px;text-align:right;top:477.84px;font-size:12px;color:#222;font-weight:normal;;letter-spacing:-0.08px">Honorar</div><svg style="position:absolute;left:319px;top:508px" width="22" height="22" viewBox="0 0 22 22"><circle cx="11" cy="11" r="10.3" fill="#efefef" stroke="#d4d4d4" stroke-width="1"/><path d="M7.8 6 L15.8 11 L7.8 16 Z" fill="#111"/></svg><div class="t" style="left:360px;top:514.04px;font-size:12px;color:#222;font-weight:normal;;letter-spacing:-0.55px;word-spacing:1.15px">LKT PLANUNG</div><div class="t" style="left:499px;top:514.04px;font-size:12px;color:#222;font-weight:normal;;letter-spacing:-0.45px;word-spacing:1.05px">03 UMS</div><div class="t" style="left:587px;top:514.04px;font-size:12px;color:#222;font-weight:normal;;letter-spacing:-0.24px">08.01.2018</div><div class="t" style="left:675px;top:514.04px;font-size:12px;color:#222;font-weight:normal;;letter-spacing:-0.08px;word-spacing:0.68px">Christoph K...</div><div class="t" style="left:763px;top:514.04px;font-size:12px;color:#222;font-weight:normal;;letter-spacing:-0.55px">ALLG</div><div class="t" style="left:838px;top:514.04px;font-size:12px;color:#222;font-weight:normal;">viel umgesetzt</div><div class="t" style="left:987px;top:514.04px;font-size:12px;color:#222;font-weight:normal;;letter-spacing:-0.22px">9:15</div><div class="t" style="left:1049px;top:514.04px;font-size:12px;color:#222;font-weight:normal;;letter-spacing:-0.24px">11:30</div><div class="t" style="left:1076px;width:100px;text-align:right;top:514.04px;font-size:12px;color:#222;font-weight:normal;;letter-spacing:-0.22px">2:15</div><div class="t" style="left:1156px;width:100px;text-align:right;top:514.04px;font-size:12px;color:#222;font-weight:normal;;letter-spacing:-0.25px">100,00</div><div class="t" style="left:1236px;width:100px;text-align:right;top:514.04px;font-size:12px;color:#222;font-weight:normal;;letter-spacing:-0.25px">225,00</div><svg style="position:absolute;left:319px;top:535px" width="22" height="22" viewBox="0 0 22 22"><circle cx="11" cy="11" r="10.3" fill="#efefef" stroke="#d4d4d4" stroke-width="1"/><path d="M7.8 6 L15.8 11 L7.8 16 Z" fill="#111"/></svg><div class="t" style="left:360px;top:541.04px;font-size:12px;color:#222;font-weight:normal;;letter-spacing:-0.55px;word-spacing:1.15px">LKT PLANUNG</div><div class="t" style="left:499px;top:541.04px;font-size:12px;color:#222;font-weight:normal;;letter-spacing:-0.45px;word-spacing:1.05px">01 ANA</div><div class="t" style="left:587px;top:541.04px;font-size:12px;color:#222;font-weight:normal;;letter-spacing:-0.24px">08.01.2018</div><div class="t" style="left:675px;top:541.04px;font-size:12px;color:#222;font-weight:normal;;letter-spacing:-0.08px;word-spacing:0.68px">Christoph K...</div><div class="t" style="left:763px;top:541.04px;font-size:12px;color:#222;font-weight:normal;;letter-spacing:-0.55px">BERA</div><div class="t" style="left:838px;top:541.04px;font-size:12px;color:#222;font-weight:normal;">Beratungsleistung</div><div class="t" style="left:1076px;width:100px;text-align:right;top:541.04px;font-size:12px;color:#222;font-weight:normal;;letter-spacing:-0.22px">2:30</div><div class="t" style="left:1156px;width:100px;text-align:right;top:541.04px;font-size:12px;color:#222;font-weight:normal;;letter-spacing:-0.25px">200,00</div><div class="t" style="left:1236px;width:100px;text-align:right;top:541.04px;font-size:12px;color:#222;font-weight:normal;;letter-spacing:-0.25px">500,00</div><svg style="position:absolute;left:319px;top:562px" width="22" height="22" viewBox="0 0 22 22"><circle cx="11" cy="11" r="10.3" fill="#efefef" stroke="#d4d4d4" stroke-width="1"/><path d="M7.8 6 L15.8 11 L7.8 16 Z" fill="#111"/></svg><div class="t" style="left:360px;top:568.04px;font-size:12px;color:#222;font-weight:normal;;letter-spacing:-0.43px;word-spacing:1.02px">457 BER</div><div class="t" style="left:499px;top:568.04px;font-size:12px;color:#222;font-weight:normal;;letter-spacing:-0.30px">02</div><div class="t" style="left:587px;top:568.04px;font-size:12px;color:#222;font-weight:normal;;letter-spacing:-0.24px">08.01.2018</div><div class="t" style="left:675px;top:568.04px;font-size:12px;color:#222;font-weight:normal;;letter-spacing:-0.08px;word-spacing:0.68px">Christoph K...</div><div class="t" style="left:838px;top:568.04px;font-size:12px;color:#222;font-weight:normal;">Scoring-Tabelle erstellt</div><div class="t" style="left:987px;top:568.04px;font-size:12px;color:#222;font-weight:normal;;letter-spacing:-0.24px">13:00</div><div class="t" style="left:1049px;top:568.04px;font-size:12px;color:#222;font-weight:normal;;letter-spacing:-0.24px">15:30</div><div class="t" style="left:1076px;width:100px;text-align:right;top:568.04px;font-size:12px;color:#222;font-weight:normal;;letter-spacing:-0.22px">2:30</div><div class="t" style="left:1156px;width:100px;text-align:right;top:568.04px;font-size:12px;color:#222;font-weight:normal;;letter-spacing:-0.25px">200,00</div><div class="t" style="left:1236px;width:100px;text-align:right;top:568.04px;font-size:12px;color:#222;font-weight:normal;;letter-spacing:-0.25px">500,00</div><svg style="position:absolute;left:319px;top:589px" width="22" height="22" viewBox="0 0 22 22"><circle cx="11" cy="11" r="10.3" fill="#efefef" stroke="#d4d4d4" stroke-width="1"/><path d="M7.8 6 L15.8 11 L7.8 16 Z" fill="#111"/></svg><div class="t" style="left:360px;top:595.04px;font-size:12px;color:#222;font-weight:normal;;letter-spacing:-0.55px">EXXO</div><div class="t" style="left:499px;top:595.04px;font-size:12px;color:#222;font-weight:normal;;letter-spacing:-0.45px;word-spacing:1.05px">00 AKQ</div><div class="t" style="left:587px;top:595.04px;font-size:12px;color:#222;font-weight:normal;;letter-spacing:-0.24px">08.01.2018</div><div class="t" style="left:675px;top:595.04px;font-size:12px;color:#222;font-weight:normal;;letter-spacing:-0.08px;word-spacing:0.68px">Christoph K...</div><div class="t" style="left:838px;top:595.04px;font-size:12px;color:#222;font-weight:normal;">Erstkontakt</div><div class="t" style="left:987px;top:595.04px;font-size:12px;color:#222;font-weight:normal;;letter-spacing:-0.24px">16:00</div><div class="t" style="left:1049px;top:595.04px;font-size:12px;color:#222;font-weight:normal;;letter-spacing:-0.24px">16:45</div><div class="t" style="left:1156px;width:100px;text-align:right;top:595.04px;font-size:12px;color:#222;font-weight:normal;;letter-spacing:-0.25px">200,00</div><div class="t" style="left:1236px;width:100px;text-align:right;top:595.04px;font-size:12px;color:#222;font-weight:normal;;letter-spacing:-0.22px">0,00</div><div style="left:1104px;top:587px;width:79px;height:26px;background:#fff;border:2px solid #8aaa3a"></div><div style="left:1154px;top:592px;width:22px;height:16px;background:#a9cdf0"></div><div class="t" style="left:1076px;width:100px;text-align:right;top:595.04px;font-size:12px;color:#1a3a6a;font-weight:normal;;letter-spacing:-0.22px">0:45</div><svg style="position:absolute;left:287.5px;top:621px" width="12" height="12" viewBox="0 0 12 12"><path d="M6 1 V11 M1 6 H11" stroke="#777" stroke-width="1.1"/><path d="M2.2 2.2 L9.8 9.8 M9.8 2.2 L2.2 9.8" stroke="#222" stroke-width="1.1"/></svg><div class="t" style="left:1076px;width:100px;text-align:right;top:659.34px;font-size:12px;color:#222;font-weight:normal;;letter-spacing:-0.22px">8:00</div><div class="t" style="left:1236px;width:100px;text-align:right;top:659.34px;font-size:12px;color:#222;font-weight:normal;;letter-spacing:-0.22px">1.225,00</div><div style="left:0;top:0;width:1398px;height:724px;border:1px solid #4e9e78"></div>
</body></html>
